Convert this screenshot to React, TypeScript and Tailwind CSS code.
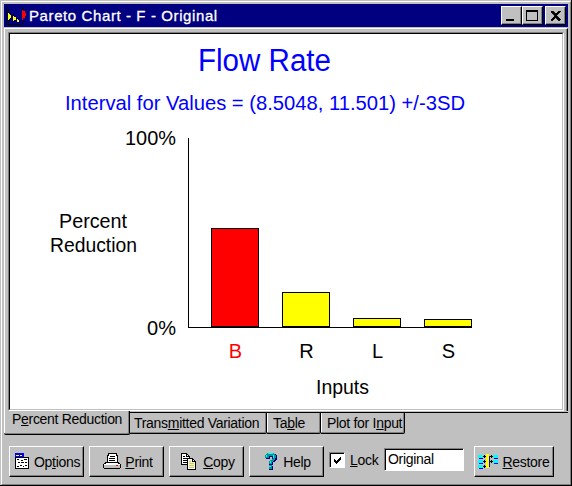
import React from 'react';

const ui = "font-['Liberation_Sans',Arial,sans-serif]";

type LabelProps = { text: string; width: number };

/* Label with one underlined access key, marked with "&". */
function Label({ text, width }: LabelProps) {
  const i = text.indexOf('&');
  return (
    <span className="block text-[14px] leading-4 tracking-[-0.3px] whitespace-nowrap" style={{ width }}>
      {i < 0 ? text : (
        <>
          {text.slice(0, i)}
          <span className="underline decoration-1 underline-offset-1">{text[i + 1]}</span>
          {text.slice(i + 2)}
        </>
      )}
    </span>
  );
}

function ChartIcon() {
  return (
    <svg width="21" height="21" viewBox="0 0 21 21" className="shrink-0" shapeRendering="crispEdges">
      <path d="M0 0h1v19h14v1H0zM2 4h1v14H2zM7 9h1v8H7zM11 13h1v5h-1zM16 2h1v18h-1z" fill="#000" />
      <path d="M2 8h1v1h1v1h1v3H4v1H3v1H2zM7 11h1v1h2v3H8v1H7zM11 14h1v1h1v2h-2z" fill="#ff0" />
      <path d="M16 5h1v1h2v2h1v3h-1v2h-2v2h-1z" fill="#f00" />
    </svg>
  );
}

function OptionsIcon() {
  return (
    <svg width="15" height="17" viewBox="0 0 15 17" className="shrink-0" shapeRendering="crispEdges">
      <path d="M0 0h9v4H0z" fill="#00f" />
      <path d="M1 2h3v1H1zM5 2h2v1H5z" fill="#ff0" />
      <path d="M.5 4.5h13v11H.5z" fill="#fff" stroke="#000" />
      <path d="M2 6h2v1H2zM6 7h2v1H6zM9 6h3v1H9zM3 9h2v1H3zM6 9h3v1H6zM10 9h2v1h-2zM2 13h2v1H2zM5 12h2v1H5zM8 13h1v1H8zM10 12h2v1h-2z" fill="#000" />
    </svg>
  );
}

function PrintIcon() {
  return (
    <svg width="19" height="17" viewBox="0 0 19 17" className="shrink-0" shapeRendering="crispEdges">
      <path d="M4.5 9.5V4.5l1-4h8l1 4v5z" fill="#fff" stroke="#000" />
      <path d="M7 3h5v1H7zM6 5h6v1H6zM6 7h6v1H6z" fill="#000" />
      <path d="M2 9h14v1h1v1h1v4h-1v1H1v-1H0v-4h1v-1h1z" fill="#000" />
      <path d="M3 10h12v1H3zM1 11h16v1H1z" fill="#fff" />
      <path d="M1 12h16v3H1z" fill="#c0c0c0" />
      <path d="M13 12h2v1h-2z" fill="#f00" />
    </svg>
  );
}

function CopyIcon() {
  return (
    <svg width="17" height="17" viewBox="0 0 17 17" className="shrink-0" shapeRendering="crispEdges">
      <path d="M.5.5h5l3 3v8h-8z" fill="#fff" stroke="#000" />
      <path d="M5.5.5v3h3M2 3.5h2M2 5.5h4M2 7.5h4M2 9.5h4" fill="none" stroke="#000" />
      <path d="M6.5 5.5h5l3 3v8h-8z" fill="#fff" stroke="#000" />
      <path d="M8 7h2v1H8zM8 9h6v1H8zM8 11h6v1H8zM8 13h6v1H8z" fill="#ff6" />
      <path d="M8 8h2v1H8zM8 10h5v1H8zM8 12h5v1H8zM8 14h5v1H8z" fill="#c0c0c0" />
      <path d="M11.5 5.5v3h3" fill="none" stroke="#000" />
    </svg>
  );
}

function HelpIcon() {
  return (
    <svg width="12" height="17" viewBox="0 0 12 17" className="shrink-0" shapeRendering="crispEdges">
      <path d="M3 1h8v1h1v5h-1v1h-1v1H8v3H4V8h1V7h2V4H5v2H1V3h1zM4 13h4v4H4z" fill="#000080" />
      <path d="M2 0h7v1h1v1h1v3h-1v2H9v1H8v1H7v2H4V8h1V7h2V6h1V3H4v2H0V2h1V1h1zM4 12h3v4H4z" fill="#009898" />
      <path d="M3 0h5v1H3zM1 2h1v2H1zM8 2h1v3H8zM5 8h1v2H5zM4 13h2v1H4z" fill="#0ff" />
    </svg>
  );
}

function RestoreIcon() {
  return (
    <svg width="21" height="16" viewBox="0 0 21 16" className="shrink-0" shapeRendering="crispEdges">
      <path d="M0 1h5v3H0zM0 6h5v3H0zM0 11h5v3H0zM15 1h5v3h-5zM15 6h5v3h-5z" fill="#0ff" />
      <path d="M1 4h4v1H1zM1 9h4v1H1zM1 14h4v1H1zM16 4h4v1h-4zM16 9h4v1h-4zM11 2h1v11h-1z" fill="#00f" />
      <path d="M5 2h3v1H5zM6 1h1v3H6zM5 7h3v1H5zM6 6h1v3H6zM5 12h3v1H5zM6 11h1v3H6zM12 2h3v1h-3zM13 1h1v3h-1zM12 7h3v1h-3zM13 6h1v3h-1z" fill="#000" />
      <path d="M8 0h3v14H8z" fill="#ff0" />
    </svg>
  );
}

function Tool({ icon, text, width, className }: { icon: React.ReactNode; text: string; width: number; className: string }) {
  return (
    <button className={`flex h-[31px] shrink-0 items-center border border-t-white border-l-white border-r-black border-b-black shadow-[inset_-1px_-1px_#808080] ${className}`}>
      {icon}
      <Label text={text} width={width} />
    </button>
  );
}

function Caption({ children }: { children: React.ReactNode }) {
  return (
    <button className="flex h-[19px] w-[21px] items-center justify-center border border-t-white border-l-white border-r-black border-b-black bg-[#c0c0c0] shadow-[inset_-1px_-1px_#808080]">
      <svg width="15" height="13" viewBox="0 0 15 13" shapeRendering="crispEdges">{children}</svg>
    </button>
  );
}

function Tab({ text, width, className }: { text: string; width: number; className: string }) {
  return (
    <div className={`h-[22px] shrink-0 rounded-br-[2px] border-y border-r border-black pt-[2px] ${className}`}>
      <Label text={text} width={width} />
    </div>
  );
}

const bars = [
  { label: 'B', x: 211, top: 228, fill: '#f00', ink: '#f00' },
  { label: 'R', x: 282, top: 292, fill: '#ff0', ink: '#000' },
  { label: 'L', x: 353, top: 318, fill: '#ff0', ink: '#000' },
  { label: 'S', x: 424, top: 319, fill: '#ff0', ink: '#000' },
];

function Chart() {
  return (
    <svg width="552" height="375" viewBox="10 34 552 375" className="block bg-white" fontSize="20">
      <g fill="#00f">
        <text x="198" y="71" fontSize="31" textLength="133" lengthAdjust="spacingAndGlyphs">Flow Rate</text>
        <text x="65" y="110" fontSize="20.5" textLength="400" lengthAdjust="spacingAndGlyphs">Interval for Values = (8.5048, 11.501) +/-3SD</text>
      </g>
      <text x="125" y="145" fontSize="21" textLength="51" lengthAdjust="spacingAndGlyphs">100%</text>
      <text x="147" y="335" fontSize="21" textLength="29" lengthAdjust="spacingAndGlyphs">0%</text>
      <text x="59" y="228" fontSize="21" textLength="68" lengthAdjust="spacingAndGlyphs">Percent</text>
      <text x="50" y="252" fontSize="21" textLength="87" lengthAdjust="spacingAndGlyphs">Reduction</text>
      <text x="316" y="394" fontSize="21" textLength="53" lengthAdjust="spacingAndGlyphs">Inputs</text>
      <path d="M188.5 138v189.5H472" fill="none" stroke="#000" shapeRendering="crispEdges" />
      {bars.map((b) => (
        <g key={b.label}>
          <rect x={b.x + 0.5} y={b.top + 0.5} width="47" height={326 - b.top} fill={b.fill} stroke="#000" shapeRendering="crispEdges" />
          <text x={b.x + 24.5} y="358" fill={b.ink} textAnchor="middle" fontSize="20">{b.label}</text>
        </g>
      ))}
    </svg>
  );
}

export default function App() {
  return (
    <div className={`flex h-[486px] w-[572px] flex-col overflow-hidden border-r border-b border-black bg-[#c0c0c0] pt-px pl-px text-black ${ui}`}>
      <div className="flex min-h-0 flex-1 flex-col border-t border-l border-r border-b border-t-white border-l-white border-r-[#808080] border-b-[#808080] pt-[2px] pr-[2px] pl-[2px]">
        <header className="flex h-[23px] shrink-0 items-center bg-[#000080] pr-[2px] pl-[2px] text-white">
          <ChartIcon />
          <span className="ml-[2px] flex-1 text-[15px] leading-5 tracking-[0.6px] whitespace-nowrap [-webkit-text-stroke:0.3px_white]">Pareto Chart - F - Original</span>
          <Caption><path d="M2 10h8v2H2z" /></Caption>
          <Caption><path d="M1 1h12v11H1zM2 3v8h10V3z" fillRule="evenodd" /></Caption>
          <span className="w-[2px]" />
          <Caption><path d="M3 2h2v1h1v1h1v1h1V4h1V3h1V2h2v1h-1v1h-1v1h-1v1H8v1h1v1h1v1h1v1h1v1h-2v-1H9V9H8V8H7v1H6v1H5v1H3v-1h1V9h1V8h1V7h1V6H6V5H5V4H4V3H3z" stroke="#000" strokeWidth=".9" /></Caption>
        </header>
        <main className="mt-px flex flex-1 flex-col">
          <div className="h-[383px] shrink-0 border-t border-r border-l border-t-white border-r-black border-l-white pt-[3px] pl-[3px] shadow-[inset_-1px_0_#808080]">
            <section className="h-[379px] w-[556px] border border-t-[#808080] border-l-[#808080] border-r-white border-b-white">
              <div className="h-[377px] w-[554px] border border-t-black border-l-black border-r-[#c0c0c0] border-b-[#c0c0c0]">
                <Chart />
              </div>
            </section>
          </div>
          <nav className="flex h-[24px] shrink-0 items-start">
            <div className="h-[24px] w-[126px] shrink-0 rounded-b-[2px] border-r border-b border-black pl-[8px] shadow-[inset_-1px_-1px_#808080,inset_1px_0_white]">
              <Label text="P&ercent Reduction" width={110} />
            </div>
            <Tab text="Trans&mitted Variation" width={126} className="mt-px w-[137px] pl-[4px] shadow-[inset_-1px_-1px_#808080]" />
            <Tab text="Ta&ble" width={36} className="mt-px w-[54px] pl-[6px] shadow-[inset_-1px_-1px_#808080,inset_1px_0_white]" />
            <Tab text="Plot for I&nput" width={74} className="mt-px w-[84px] pl-[6px] tracking-tight shadow-[inset_-1px_-1px_#808080,inset_1px_0_white]" />
            <div className="mt-px flex-1 border-t border-black" />
          </nav>
          <footer className="mt-[11px] flex h-[31px] shrink-0 items-center pl-[5px]">
            <Tool icon={<OptionsIcon />} text="Op&tions" width={46} className="w-[75px] gap-[4px] pl-[5px]" />
            <Tool icon={<PrintIcon />} text="&Print" width={28} className="ml-[5px] w-[75px] gap-[3px] pl-[13px]" />
            <Tool icon={<CopyIcon />} text="&Copy" width={32} className="ml-[5px] w-[75px] gap-[5px] pl-[11px]" />
            <Tool icon={<HelpIcon />} text="Help" width={28} className="ml-[5px] w-[75px] gap-[6px] pl-[15px]" />
            <span className="mb-[3px] ml-[5px] flex h-[16px] w-[16px] items-center justify-center border border-t-[#808080] border-l-[#808080] border-r-white border-b-white bg-white shadow-[inset_1px_1px_black]">
              <svg width="9" height="9" viewBox="0 0 9 9" shapeRendering="crispEdges"><path d="M1 3h1v1h1v1h1V4h1V3h1V2h1V1h1v3H7v1H6v1H5v1H4v1H3V7H2V6H1z" /></svg>
            </span>
            <span className="mb-[3px] ml-[5px]"><Label text="&Lock" width={30} /></span>
            <div className="mb-[4px] ml-[4px] h-[23px] w-[80px] border border-t-[#808080] border-l-[#808080] border-r-white border-b-white bg-white pt-[2px] pl-[3px] shadow-[inset_1px_1px_black]">
              <Label text="Original" width={46} />
            </div>
            <Tool icon={<RestoreIcon />} text="&Restore" width={48} className="ml-[10px] w-[80px] gap-[3px] pl-[3px]" />
          </footer>
        </main>
      </div>
    </div>
  );
}
